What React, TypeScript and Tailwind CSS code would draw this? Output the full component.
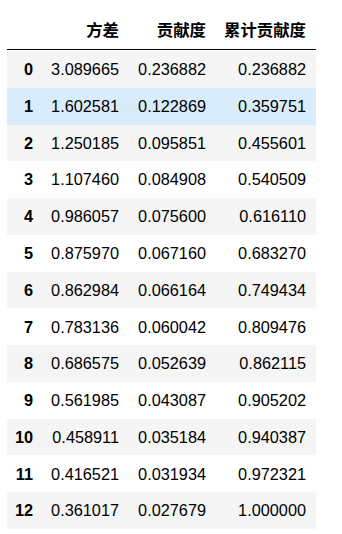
import React from "react";

const rows: [string, string, string, string][] = [
  ["0", "3.089665", "0.236882", "0.236882"],
  ["1", "1.602581", "0.122869", "0.359751"],
  ["2", "1.250185", "0.095851", "0.455601"],
  ["3", "1.107460", "0.084908", "0.540509"],
  ["4", "0.986057", "0.075600", "0.616110"],
  ["5", "0.875970", "0.067160", "0.683270"],
  ["6", "0.862984", "0.066164", "0.749434"],
  ["7", "0.783136", "0.060042", "0.809476"],
  ["8", "0.686575", "0.052639", "0.862115"],
  ["9", "0.561985", "0.043087", "0.905202"],
  ["10", "0.458911", "0.035184", "0.940387"],
  ["11", "0.416521", "0.031934", "0.972321"],
  ["12", "0.361017", "0.027679", "1.000000"],
];

export default function App() {
  return (
    <div
      className="w-[342px] h-[534px] bg-white text-black pl-[7px]"
      style={{ fontFamily: '"Liberation Sans", "Noto Sans CJK SC", Arial, sans-serif' }}
    >
      <div className="w-[309px]">
        <div className="grid grid-cols-[36px_86px_87px_100px] h-[50px] items-end pb-[6px] border-b border-black text-[16.4px] font-bold">
          <div />
          <div className="text-right pr-[10px]">方差</div>
          <div className="text-right pr-[10px]">贡献度</div>
          <div className="text-right pr-[10px]">累计贡献度</div>
        </div>
        <div className="h-px" />
        {rows.map((r, i) => (
          <div
            key={r[0]}
            className={
              "grid grid-cols-[36px_86px_87px_100px] h-[36.77px] items-center text-[16.3px] " +
              (i === 1 ? "bg-[#d9ecfb]" : i % 2 === 0 ? "bg-[#f5f5f5]" : "bg-white")
            }
          >
            <div className="text-right pr-[10px] font-bold">{r[0]}</div>
            <div className="text-right pr-[10px]">{r[1]}</div>
            <div className="text-right pr-[10px]">{r[2]}</div>
            <div className="text-right pr-[10px]">{r[3]}</div>
          </div>
        ))}
      </div>
    </div>
  );
}
